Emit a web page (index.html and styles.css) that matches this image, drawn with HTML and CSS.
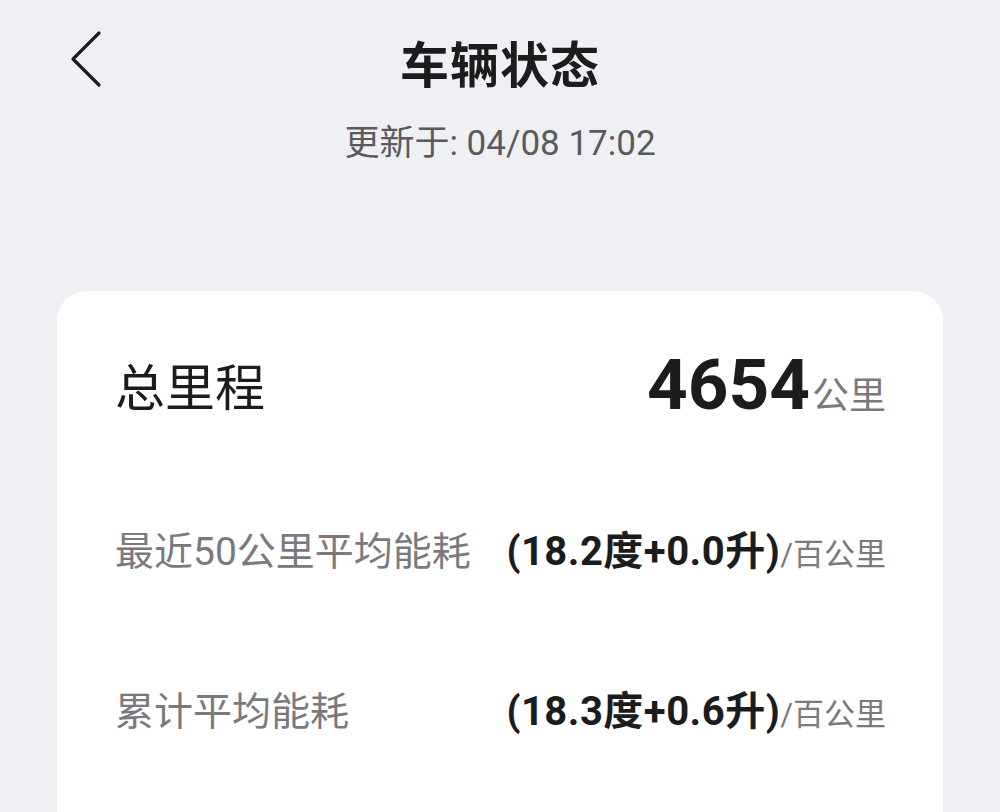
FILE: index.html
```html
<!DOCTYPE html>
<html lang="zh-CN">
<head>
<meta charset="utf-8">
<title>车辆状态</title>
<link rel="stylesheet" href="styles.css">
</head>
<body>
<div class="page">
  <header class="topbar">
    <button class="back" aria-label="返回">
      <svg width="34" height="60" viewBox="0 0 34 60"><path d="M30 4 L4 30 L30 56" fill="none" stroke="#1c1c1e" stroke-width="3.2" stroke-linecap="round" stroke-linejoin="round"/></svg>
    </button>
    <h1 class="title">车辆状态</h1>
    <span></span>
  </header>
  <p class="updated">更新于: 04/08 17:02</p>
  <section class="card">
    <div class="row total">
      <span class="label-main">总里程</span>
      <span class="value-main"><b class="num">4654</b><span class="unit">公里</span></span>
    </div>
    <div class="row stat">
      <span class="label">最近50公里平均能耗</span>
      <span class="value"><b>(18.2度+0.0升)</b><span class="per">/百公里</span></span>
    </div>
    <div class="row stat">
      <span class="label">累计平均能耗</span>
      <span class="value"><b>(18.3度+0.6升)</b><span class="per">/百公里</span></span>
    </div>
  </section>
</div>
</body>
</html>
```

FILE: styles.css
```css
* { box-sizing: border-box; }
html, body { margin: 0; padding: 0; }
body {
  background: #eef0f4;
  font-family: Roboto, "Noto Sans CJK SC", sans-serif;
  color: #1c1c1e;
  width: 1000px;
  height: 812px;
  overflow: hidden;
}
.page {
  padding: 0 57px;
}
.topbar {
  display: grid;
  grid-template-columns: 1fr auto 1fr;
  align-items: center;
  height: 120px;
}
.back {
  justify-self: start;
  margin-left: 12px;
  margin-top: -2px;
  background: none;
  border: 0;
  padding: 0;
  display: flex;
}
.title {
  margin: 2px 0 0;
  font-size: 49px;
  font-weight: 700;
  letter-spacing: 1px;
  color: #1c1c1e;
}
.updated {
  margin: 2px 0 0;
  text-align: center;
  font-size: 35px;
  color: #5a5a5e;
  line-height: 44px;
}
.card {
  margin-top: 125px;
  background: #ffffff;
  border-radius: 30px 30px 0 0;
  height: 521px;
  padding: 50px 57px 0 58px;
  display: flex;
  flex-direction: column;
}
.row {
  display: flex;
  justify-content: space-between;
  align-items: baseline;
}
.total { height: 86px; align-items: center; }
.label-main {
  font-size: 50px;
  color: #1c1c1e;
}
.value-main { display: flex; align-items: baseline; }
.num {
  font-size: 71px;
  font-weight: 700;
  color: #1c1c1e;
}
.unit {
  font-size: 37px;
  color: #7a7a7e;
  margin-left: 2px;
}
.stat { margin-top: 84px; height: 74px; align-items: center; }
.stat + .stat { margin-top: 86px; }
.label {
  font-size: 39px;
  color: #7a7a7e;
}
.value { display: flex; align-items: baseline; }
.value b {
  font-size: 40px;
  font-weight: 700;
  color: #1c1c1e;
  letter-spacing: 0.5px;
}
.per {
  font-size: 31px;
  color: #7a7a7e;
}
```
